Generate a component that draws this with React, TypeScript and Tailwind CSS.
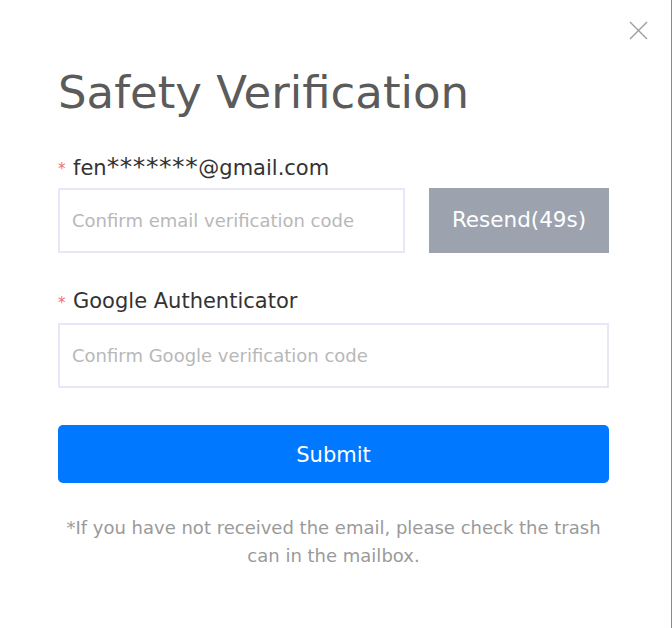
import React from "react";

export default function App() {
  return (
    <div
      className="relative w-[672px] h-[628px] bg-white border-r border-[#8a8a8a] overflow-hidden"
      style={{ fontFamily: '"DejaVu Sans", Verdana, sans-serif' }}
    >
      <button className="absolute left-[629px] top-[21px] w-[19px] h-[19px] flex items-center justify-center">
        <svg width="19" height="19" viewBox="0 0 19 19" fill="none">
          <path d="M1 1L18 18M18 1L1 18" stroke="#9a9ea6" strokeWidth="1.4" />
        </svg>
      </button>

      <div className="pl-[58px] pr-[62px] pt-[70px] flex flex-col">
        <h1 className="text-[45px] leading-[45px] text-[#5b5b5b] font-normal">Safety Verification</h1>

        <div className="mt-[38px] flex items-center h-[28px]">
          <span className="text-[#f56c6c] text-[15px] leading-[28px] w-[15px] mt-[3px]">*</span>
          <span className="text-[21px] leading-[28px] text-[#333333]">
            fen<span className="text-[25px] leading-[28px] tracking-[0.6px]">*******</span>@gmail.com
          </span>
        </div>

        <div className="mt-[7px] flex gap-[24px]">
          <input
            className="h-[65px] w-[347px] border-2 border-[#e6e8f8] px-[12px] text-[18px] outline-none placeholder:text-[#b8b8b8]"
            placeholder="Confirm email verification code"
          />
          <button className="h-[65px] flex-1 bg-[#9ca3af] text-white text-[21.5px]">Resend(49s)</button>
        </div>

        <div className="mt-[34px] flex items-center h-[28px]">
          <span className="text-[#f56c6c] text-[15px] leading-[28px] w-[15px] mt-[3px]">*</span>
          <span className="text-[21px] leading-[28px] text-[#333333]">Google Authenticator</span>
        </div>

        <input
          className="mt-[8px] h-[65px] w-full border-2 border-[#e6e8f8] px-[12px] text-[18px] outline-none placeholder:text-[#b8b8b8]"
          placeholder="Confirm Google verification code"
        />

        <button className="mt-[37px] h-[58px] w-full rounded-[5px] bg-[#0078ff] text-white text-[21px] pt-[3px]">Submit</button>

        <p className="mt-[31px] text-center text-[18px] leading-[28px] text-[#9a9a9a]">
          *If you have not received the email, please check the trash can in the mailbox.
        </p>
      </div>
    </div>
  );
}
